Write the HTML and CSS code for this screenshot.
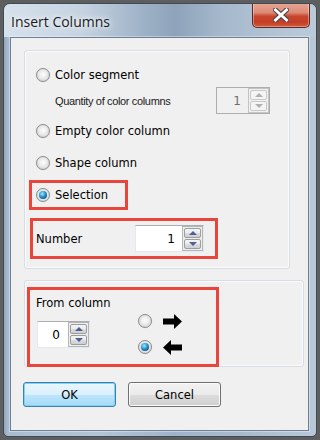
FILE: index.html
```html
<!DOCTYPE html>
<html>
<head>
<meta charset="utf-8">
<link rel="stylesheet" href="styles.css">
</head>
<body>
<div class="window">
  <div class="titlebar">
    <span class="title">Insert Columns</span>
    <span class="close">
      <svg width="16" height="14" viewBox="0 0 16 14">
        <path d="M2.5 2 L13.5 12 M13.5 2 L2.5 12" stroke="#3d3f44" stroke-width="5" stroke-linecap="square"/>
        <path d="M2.5 2 L13.5 12 M13.5 2 L2.5 12" stroke="#ffffff" stroke-width="3" stroke-linecap="square"/>
      </svg>
    </span>
  </div>
  <div class="client">
    <div class="group g1">
      <div class="row radio-row r1"><span class="radio"></span><span>Color segment</span></div>
      <div class="row qty-row">
        <span class="small">Quantity of color columns</span>
        <div class="spin spin-disabled qty-spin">
          <span class="spin-val">1</span>
          <div class="spin-btns">
            <span class="spin-btn"><span class="tri up"></span></span>
            <span class="spin-btn"><span class="tri down"></span></span>
          </div>
        </div>
      </div>
      <div class="row radio-row r3"><span class="radio"></span><span>Empty color column</span></div>
      <div class="row radio-row r4"><span class="radio"></span><span>Shape column</span></div>
      <div class="redbox sel-box"><span class="radio checked"></span><span>Selection</span></div>
      <div class="redbox num-box">
        <span>Number</span>
        <div class="spin num-spin">
          <span class="spin-val">1</span>
          <div class="spin-btns">
            <span class="spin-btn"><span class="tri up"></span></span>
            <span class="spin-btn"><span class="tri down"></span></span>
          </div>
        </div>
      </div>
    </div>
    <div class="group g2">
      <div class="redbox from-box">
        <div class="from-left">
          <span class="from-label">From column</span>
          <div class="spin from-spin">
            <span class="spin-val">0</span>
            <div class="spin-btns">
              <span class="spin-btn"><span class="tri up"></span></span>
              <span class="spin-btn"><span class="tri down"></span></span>
            </div>
          </div>
        </div>
        <div class="from-right">
          <div class="dir-row">
            <span class="radio"></span>
            <svg class="arrow" width="19" height="15" viewBox="0 0 19 15"><polygon points="0,4.5 11,4.5 11,0 19,7.5 11,15 11,10.5 0,10.5" fill="#000"/></svg>
          </div>
          <div class="dir-row">
            <span class="radio checked"></span>
            <svg class="arrow" width="19" height="15" viewBox="0 0 19 15"><polygon points="19,4.5 8,4.5 8,0 0,7.5 8,15 8,10.5 19,10.5" fill="#000"/></svg>
          </div>
        </div>
      </div>
    </div>
    <div class="buttons">
      <button class="btn btn-ok">OK</button>
      <button class="btn">Cancel</button>
    </div>
  </div>
</div>
</body>
</html>
```

FILE: styles.css
```css
html, body {
  margin: 0;
  padding: 0;
}
body {
  width: 320px;
  height: 440px;
  overflow: hidden;
  background: #5e5e5e;
  font-family: "DejaVu Sans", sans-serif;
  font-size: 11.5px;
  color: #000;
}
.window {
  margin: 3px 0 0 3px;
  width: 314px;
  height: 434px;
  box-sizing: border-box;
  border: 1px solid #3e4a58;
  border-radius: 7px 7px 5px 5px;
  background: linear-gradient(to right, #8ea4bb 0px, #a9bccf 4px, #b3c4d6 30%, #9fb3c8 55%, #a7bacd 75%, #b8c8d8 100%);
  display: flex;
  flex-direction: column;
  overflow: hidden;
}
.titlebar {
  height: 33px;
  display: flex;
  align-items: center;
  padding-left: 7px;
  background: linear-gradient(to right, #d6e1ec 0%, #c5d3e1 25%, #9db1c6 45%, #8ea3ba 55%, #a6b9cc 70%, #bccbda 100%);
}
.title {
  font-family: "Open Sans", sans-serif;
  font-size: 14px;
  color: #1a1a1a;
  text-shadow: 0 0 8px #fff, 0 0 4px #fff;
  margin-top: 2px;
}
.close {
  margin-left: auto;
  margin-right: 6px;
  align-self: flex-start;
  margin-top: -1px;
  width: 58px;
  height: 25px;
  box-sizing: border-box;
  border: 1px solid #5b2a24;
  border-top: none;
  border-radius: 0 0 5px 5px;
  background: linear-gradient(to bottom, #e7a796 0%, #dd8a75 40%, #c8462e 55%, #c43e25 80%, #d15a3c 100%);
  box-shadow: inset 0 0 0 1px rgba(255,255,255,0.35);
  display: flex;
  align-items: center;
  justify-content: center;
}
.client {
  flex: 1;
  margin: 0 7px 5px 6px;
  background: #f0f0f0;
  border: 1px solid #6c7f94;
  box-shadow: 0 0 0 1px rgba(255,255,255,0.35);
  padding: 12px 0 0 13px;
  display: flex;
  flex-direction: column;
}
.group {
  box-sizing: border-box;
  border: 1px solid #d6dde4;
  border-radius: 3px;
  box-shadow: inset 0 0 0 1px #fbfbfb;
  display: flex;
  flex-direction: column;
}
.g1 {
  width: 266px;
  height: 219px;
  padding: 14px 0 0 0;
}
.g2 {
  width: 280px;
  margin-top: 11px;
  padding-top: 6px;
}
.row {
  display: flex;
  align-items: center;
}
.radio-row {
  height: 20px;
  padding-left: 11px;
  gap: 5px;
}
.r3 { margin-top: 7px; }
.r4 { margin-top: 12px; }
.qty-row {
  height: 27px;
  margin-top: 2px;
  padding-left: 30px;
  padding-right: 19px;
}
.small {
  font-family: "Liberation Sans", sans-serif;
  font-size: 11px;
  letter-spacing: -0.35px;
  color: #1b1b1b;
  margin-top: 1px;
}
.radio {
  width: 14px;
  height: 14px;
  box-sizing: border-box;
  border-radius: 50%;
  border: 1px solid #8d8d8d;
  background: radial-gradient(circle at 50% 45%, #fbfbfb 0%, #f0f0f0 35%, #dadada 70%, #c4c4c4 100%);
  box-shadow: 0 0 1px rgba(0,0,0,0.15);
  display: inline-flex;
  align-items: center;
  justify-content: center;
  flex: none;
}
.radio.checked::after {
  content: "";
  width: 8px;
  height: 8px;
  border-radius: 50%;
  background: radial-gradient(circle at 40% 35%, #a7ecff 0%, #39a6dc 35%, #12609e 70%, #0a3a6a 100%);
}
.redbox {
  box-sizing: border-box;
  border: 3px solid #e8453c;
}
.sel-box {
  width: 99px;
  height: 30px;
  margin: 7px 0 0 4px;
  padding-left: 4px;
  display: flex;
  align-items: center;
  gap: 5px;
}
.num-box {
  width: 188px;
  height: 41px;
  margin: 8px 0 0 5px;
  padding: 0 11px 0 3px;
  display: flex;
  align-items: center;
}
.spin {
  margin-left: auto;
  display: flex;
  box-sizing: border-box;
  height: 27px;
  background: #fff;
  border: 1px solid #e3e9ef;
  border-top-color: #abadb3;
}
.spin-val {
  flex: 1;
  text-align: right;
  padding-right: 7px;
  align-self: center;
  font-size: 12px;
}
.spin-btns {
  width: 21px;
  box-sizing: border-box;
  border: 1px solid #b5b5b5;
  display: flex;
  flex-direction: column;
  padding: 1px;
  gap: 1px;
  background: #ededed;
}
.spin-btn {
  flex: 1;
  background: linear-gradient(to bottom, #f4f4f4 0%, #ebebeb 50%, #dcdcdc 51%, #cfcfcf 100%);
  border: 1px solid #9d9d9d;
  border-radius: 2px;
  display: flex;
  align-items: center;
  justify-content: center;
}
.tri {
  width: 0;
  height: 0;
  border-left: 4px solid transparent;
  border-right: 4px solid transparent;
}
.tri.up { border-bottom: 4px solid #4c5f97; }
.tri.down { border-top: 4px solid #4c5f97; }
.num-spin { width: 69px; }
.qty-spin { width: 54px; }
.spin-disabled {
  background: #f0f0f0;
  border: 1px solid #adadad;
}
.spin-disabled .spin-val { color: #6d6d6d; }
.spin-disabled .spin-btns { border-color: #c4c4c4; background: #f0f0f0; }
.spin-disabled .spin-btn {
  background: #f4f4f4;
  border-color: #c9c9c9;
}
.spin-disabled .tri.up { border-bottom-color: #b0b0b0; }
.spin-disabled .tri.down { border-top-color: #b0b0b0; }
.from-box {
  width: 192px;
  height: 80px;
  margin: 0 0 -1px 2px;
  padding: 6px 0 0 6px;
  display: flex;
}
.from-left {
  display: flex;
  flex-direction: column;
}
.from-label {
  line-height: 14px;
}
.from-spin {
  margin: 11px 0 0 1px;
  width: 53px;
}
.from-spin .spin-val { padding-right: 8px; }
.from-right {
  margin: 15px 0 0 28px;
  display: flex;
  flex-direction: column;
  gap: 6px;
}
.dir-row {
  height: 20px;
  display: flex;
  align-items: center;
  gap: 11px;
}
.buttons {
  display: flex;
  gap: 12px;
  margin: 15px 0 0 -1px;
}
.btn {
  width: 93px;
  height: 25px;
  box-sizing: border-box;
  border: 1px solid #707070;
  border-radius: 3px;
  background: linear-gradient(to bottom, #f2f2f2 0%, #ebebeb 50%, #dddddd 51%, #cfcfcf 100%);
  box-shadow: inset 0 0 0 1px #fbfbfb;
  font-family: "DejaVu Sans", sans-serif;
  font-size: 11.5px;
  color: #000;
  padding: 0;
}
.btn-ok {
  border-color: #3c7fb1;
  background: linear-gradient(to bottom, #eaf6fd 0%, #d9f0fc 50%, #bee6fd 51%, #a7d9f5 100%);
  box-shadow: inset 0 0 0 1px #7fd2f3;
}
```
